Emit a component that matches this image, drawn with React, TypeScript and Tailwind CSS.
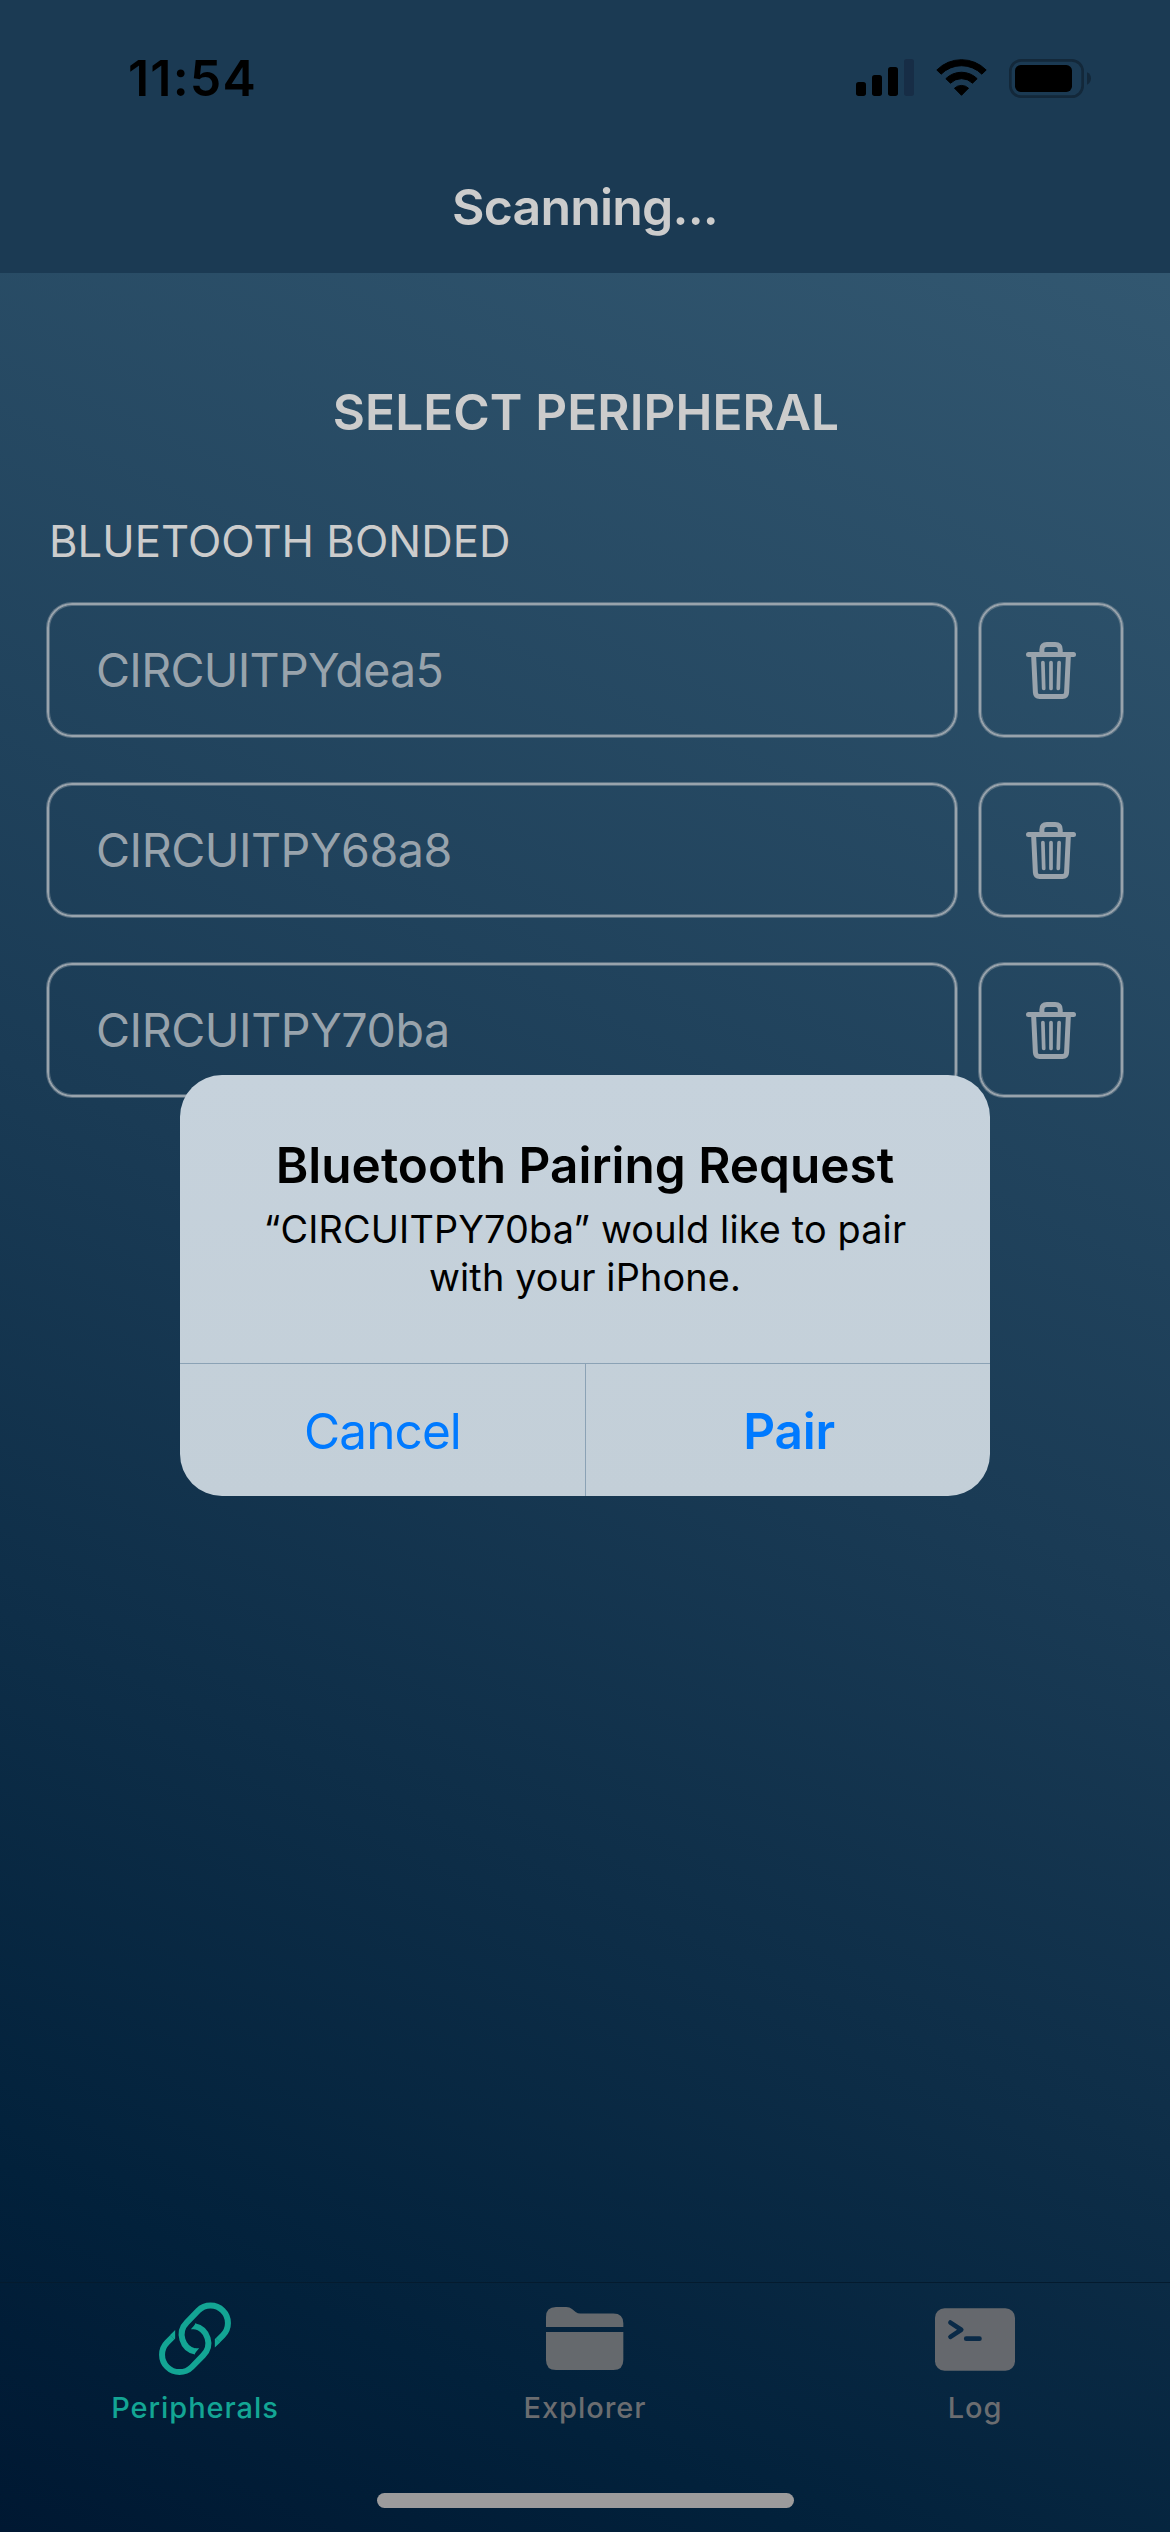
import React from "react";

const devices = [
  { name: "CIRCUITPYdea5", tracking: "tracking-[-0.7px]" },
  { name: "CIRCUITPY68a8", tracking: "tracking-[-0.46px]" },
  { name: "CIRCUITPY70ba", tracking: "tracking-[-0.43px]" },
];

function SignalIcon() {
  return (
    <svg className="h-[38px] w-[58px]" viewBox="48 57 174 114">
      <rect x="48" y="126" width="30" height="42" rx="8" />
      <rect x="96" y="105" width="30" height="63" rx="8" />
      <rect x="144" y="81" width="30" height="87" rx="8" />
      <rect x="192" y="57" width="30" height="111" rx="8" fill="#172d46" />
    </svg>
  );
}

function WifiIcon() {
  return (
    <svg className="ml-[22px] h-[38px] w-[51px]" viewBox="287.5 57 153 114" stroke="#000" strokeWidth="3" strokeLinejoin="round">
      <path d="M290 90 A104 104 0 0 1 438 90 L425 102.500 A86 86 0 0 0 303 102.500 Z" />
      <path d="M317 116 A67 67 0 0 1 411 116 L397 129.500 A47 47 0 0 0 331 129.500 Z" />
      <path d="M343 144.500 A31 31 0 0 1 385 144.500 L364 166 Z" />
    </svg>
  );
}

function BatteryIcon() {
  return (
    <svg className="ml-[22px] h-[39px] w-[82px]" viewBox="507 54 246 117">
      <rect x="511" y="58" width="217" height="109" rx="33" fill="none" stroke="#13283a" strokeWidth="8" />
      <rect x="525" y="72" width="171" height="81" rx="17" />
      <path d="M741 94 C757 101 757 124 741 131 Z" fill="#13283a" />
    </svg>
  );
}

function TrashIcon() {
  return (
    <svg className="h-[57px] w-[50px]" viewBox="0 0 50 57" fill="none" stroke="#99a3ac" strokeLinecap="round">
      <path d="M2.500 12.500 H47.500" strokeWidth="5" />
      <path d="M15.900 12 V7.500 Q15.900 2.500 20.900 2.500 H29.200 Q34.200 2.500 34.200 7.500 V12" strokeWidth="5" strokeLinecap="butt" />
      <path d="M7.600 13 L9.400 50.500 Q9.600 54.500 13.600 54.500 H36.400 Q40.400 54.500 40.600 50.500 L42.400 13" strokeWidth="5" />
      <path d="M16.900 20.500 L17.700 46.500 M25 20.500 V46.500 M33.100 20.500 L32.300 46.500" strokeWidth="3.700" />
    </svg>
  );
}

function LinkHalf() {
  return (
    <>
      <path
        d="M381 240 L396 225 A52 52 0 0 0 322 151 L288 186 A52 52 0 0 0 314 273.800"
        fill="none"
        stroke="#13a594"
        strokeWidth="18"
      />
      <path d="M372 236.300 L374.600 233.600 L388 246.400 L372 261.700 Z M312 264 L325 264 L311 280 Z" fill="#13a594" />
    </>
  );
}

function LinkIcon() {
  return (
    <svg className="h-[74px] w-[74px]" viewBox="201.500 125 222 222">
      <LinkHalf />
      <g transform="rotate(180 312.500 235.500)">
        <LinkHalf />
      </g>
    </svg>
  );
}

function FolderIcon() {
  return (
    <svg className="h-[74px] w-[78px]" viewBox="135 126 234 222" fill="#65696d">
      <path d="M135 201 V171 Q135 141 165 141 H196 Q206 141 213 147 L224 156 Q230 160.500 238 160.500 H337 Q367 160.500 367 190 V201 Z" />
      <path d="M135 216 H367 V300 Q367 330 337 330 H165 Q135 330 135 300 Z" />
    </svg>
  );
}

function LogIcon() {
  return (
    <svg className="h-[74px] w-[80px]" viewBox="102 126 241 222">
      <rect x="102" y="144" width="241" height="189" rx="29" fill="#65686d" />
      <path
        d="M148.500 187.500 L181 209 L148.500 230.500 M196 236 H236"
        fill="none"
        stroke="#0a2a47"
        strokeWidth="14"
        strokeLinecap="round"
        strokeLinejoin="round"
      />
    </svg>
  );
}

const outline =
  "border-2 border-[#98a3ac] rounded-[25px] shadow-[0_0_0_1px_rgba(152,163,172,0.45),inset_0_0_0_1px_rgba(152,163,172,0.45)]";

function Tab({ icon, label, active }: { icon: React.ReactNode; label: string; active?: boolean }) {
  return (
    <div className="flex flex-1 flex-col items-center pt-[19px]">
      {icon}
      <span
        className={`mt-3.5 text-[29px] leading-9 font-medium tracking-[0.95px] ${active ? "text-[#13a594]" : "text-[#6b6d70]"}`}
      >
        {label}
      </span>
    </div>
  );
}

export default function App() {
  return (
    <div className="relative flex h-[2532px] w-[1170px] flex-col overflow-hidden bg-[linear-gradient(24.8deg,#001832_0%,#02213b_12%,#1a3b55_48%,#375d76_100%)] font-['Inter',sans-serif]">
      <header className="h-[273px] bg-[#1b3a53]">
        <div className="flex h-[156px] items-center justify-between pr-[79px] pl-[128px]">
          <span className="text-[50px] leading-[60px] font-semibold tracking-[1.2px]">11:54</span>
          <div className="flex items-center">
            <SignalIcon />
            <WifiIcon />
            <BatteryIcon />
          </div>
        </div>
        <h1 className="text-center text-[50px] leading-[102px] font-semibold tracking-[-0.8px] text-[#cccccc]">Scanning...</h1>
      </header>

      <main className="flex flex-1 flex-col px-[47px] pt-[109px]">
        <h2 className="pl-0.5 text-center text-[49.5px] leading-[60px] font-semibold tracking-[0.1px] text-[#cccccc]">SELECT PERIPHERAL</h2>
        <h3 className="mt-[73px] pl-0.5 text-[43.6px] leading-[54px] tracking-[0.05px] text-[#cccccc]">BLUETOOTH BONDED</h3>
        <div className="mt-[34px] flex flex-col gap-[46px]">
          {devices.map((d) => (
            <div key={d.name} className="flex h-[134px] gap-[22px]">
              <div className={`flex flex-1 items-center pl-[47px] ${outline}`}>
                <span className={`text-[46.6px] leading-[56px] text-[#98a3ac] ${d.tracking}`}>{d.name}</span>
              </div>
              <div className={`flex w-[144px] items-center justify-center ${outline}`}>
                <TrashIcon />
              </div>
            </div>
          ))}
        </div>
      </main>

      <nav className="flex h-[250px] flex-col border-t border-[#041b2e]">
        <div className="flex h-[210px]">
          <Tab icon={<LinkIcon />} label="Peripherals" active />
          <Tab icon={<FolderIcon />} label="Explorer" />
          <Tab icon={<LogIcon />} label="Log" />
        </div>
        <div className="h-[15px] w-[417px] self-center rounded-full bg-[#9c9b9c]" />
      </nav>

      <div className="absolute inset-0 flex flex-col items-center pt-[1075px]">
        <div className="flex h-[421px] w-[810px] flex-col overflow-hidden rounded-[42px] bg-linear-to-b from-[#c6d2dc] to-[#c3cfd8] text-center">
          <div className="h-[288px] shrink-0 pt-[60px]">
            <div className="text-[49.5px] leading-[60px] font-semibold">Bluetooth Pairing Request</div>
            <div className="mt-2.5 text-[37.8px] leading-[48px] tracking-[0.16px]">
              “CIRCUITPY70ba” would like to pair
              <br />
              with your iPhone.
            </div>
          </div>
          <div className="flex h-[133px] border-t border-[#8ba2b5] pt-0 text-[49.5px] leading-[134px] text-[#007aff]">
            <div className="h-[132px] w-[406px] border-r border-[#8ba2b5] tracking-[-0.9px]">Cancel</div>
            <div className="h-[132px] flex-1 pl-0.5 font-semibold tracking-[-0.2px]">Pair</div>
          </div>
        </div>
      </div>
    </div>
  );
}
